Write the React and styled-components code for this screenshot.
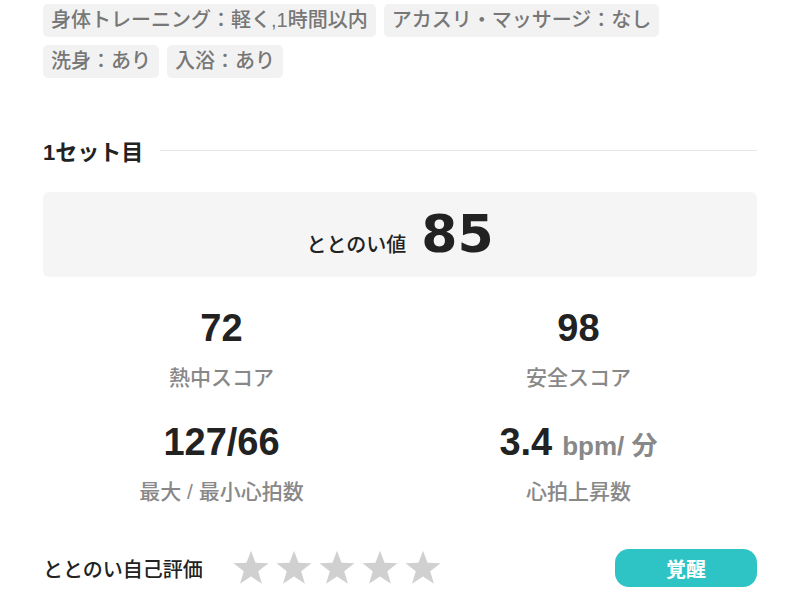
import React from 'react'
import styled, { createGlobalStyle } from 'styled-components'

const GlobalStyle = createGlobalStyle`
  html, body {
    margin: 0;
    padding: 0;
    background: #fff;
  }
  body {
    font-family: "Liberation Sans", "Noto Sans CJK JP", sans-serif;
    color: #222;
  }
`

const Page = styled.div`
  width: 800px;
  height: 600px;
  overflow: hidden;
  box-sizing: border-box;
  padding: 4px 43px 0;
`

const TagList = styled.div`
  display: flex;
  flex-wrap: wrap;
  gap: 8px;
`

const Tag = styled.span`
  display: inline-block;
  height: 33px;
  line-height: 33px;
  padding: 0 8px;
  border-radius: 5px;
  background: #f2f2f2;
  color: #777;
  font-size: 20px;
  font-weight: 500;
`

const SectionHeader = styled.div`
  display: flex;
  align-items: center;
  margin-top: 60px;
  height: 24px;
`

const SectionTitle = styled.h2`
  margin: 0;
  font-size: 22px;
  font-weight: 700;
  color: #222;
  white-space: nowrap;
`

const Rule = styled.div`
  flex: 1;
  height: 1px;
  margin-left: 17px;
  background: #e6e6e6;
`

const ScoreBox = styled.div`
  margin-top: 30px;
  height: 85px;
  border-radius: 6px;
  background: #f5f5f5;
  display: flex;
  align-items: baseline;
  justify-content: center;
  gap: 15px;
  line-height: 85px;
`

const ScoreLabel = styled.span`
  font-size: 20px;
  font-weight: 500;
  color: #222;
`

const ScoreValue = styled.span`
  font-family: "DejaVu Sans", "Liberation Sans", sans-serif;
  font-size: 52px;
  font-weight: 700;
  color: #222;
`

const StatsGrid = styled.div`
  display: grid;
  grid-template-columns: 1fr 1fr;
  row-gap: 29px;
  margin-top: 31px;
`

const Stat = styled.div`
  display: flex;
  flex-direction: column;
  align-items: center;
`

const StatValue = styled.div`
  height: 40px;
  line-height: 40px;
  font-size: 38px;
  font-weight: 700;
  color: #222;
  white-space: nowrap;
`

const Unit = styled.span`
  font-size: 26px;
  color: #888;
  margin-left: 10px;
`

const StatLabel = styled.div`
  margin-top: 15px;
  height: 30px;
  line-height: 30px;
  font-size: 21px;
  font-weight: 500;
  color: #888;
`

const RatingRow = styled.div`
  display: flex;
  align-items: center;
  margin-top: 42px;
`

const RatingLabel = styled.span`
  font-size: 20px;
  font-weight: 500;
  color: #222;
`

const Stars = styled.div`
  display: flex;
  gap: 5px;
  margin-left: 29px;
  svg {
    display: block;
  }
`

const StateButton = styled.button`
  margin-left: auto;
  width: 142px;
  height: 38px;
  border: none;
  border-radius: 14px;
  background: #2ec3c5;
  color: #fff;
  font-family: inherit;
  font-size: 20px;
  font-weight: 700;
  cursor: pointer;
`

const Star = () => (
  <svg width="38" height="36" viewBox="0 0 24 23">
    <polygon
      fill="#d0d0d0"
      points="12,0.5 14.9,8.2 23.2,8.5 16.6,13.6 19,21.6 12,16.9 5,21.6 7.4,13.6 0.8,8.5 9.1,8.2"
    />
  </svg>
)

const tags = ['身体トレーニング：軽く,1時間以内', 'アカスリ・マッサージ：なし', '洗身：あり', '入浴：あり']

export default function App() {
  return (
    <>
      <GlobalStyle />
      <Page>
        <TagList>
          {tags.map((t) => (
            <Tag key={t}>{t}</Tag>
          ))}
        </TagList>

        <SectionHeader>
          <SectionTitle>1セット目</SectionTitle>
          <Rule />
        </SectionHeader>

        <ScoreBox>
          <ScoreLabel>ととのい値</ScoreLabel>
          <ScoreValue>85</ScoreValue>
        </ScoreBox>

        <StatsGrid>
          <Stat>
            <StatValue>72</StatValue>
            <StatLabel>熱中スコア</StatLabel>
          </Stat>
          <Stat>
            <StatValue>98</StatValue>
            <StatLabel>安全スコア</StatLabel>
          </Stat>
          <Stat>
            <StatValue>127/66</StatValue>
            <StatLabel>最大 / 最小心拍数</StatLabel>
          </Stat>
          <Stat>
            <StatValue>
              3.4<Unit>bpm/ 分</Unit>
            </StatValue>
            <StatLabel>心拍上昇数</StatLabel>
          </Stat>
        </StatsGrid>

        <RatingRow>
          <RatingLabel>ととのい自己評価</RatingLabel>
          <Stars>
            {[0, 1, 2, 3, 4].map((i) => (
              <Star key={i} />
            ))}
          </Stars>
          <StateButton>覚醒</StateButton>
        </RatingRow>
      </Page>
    </>
  )
}
